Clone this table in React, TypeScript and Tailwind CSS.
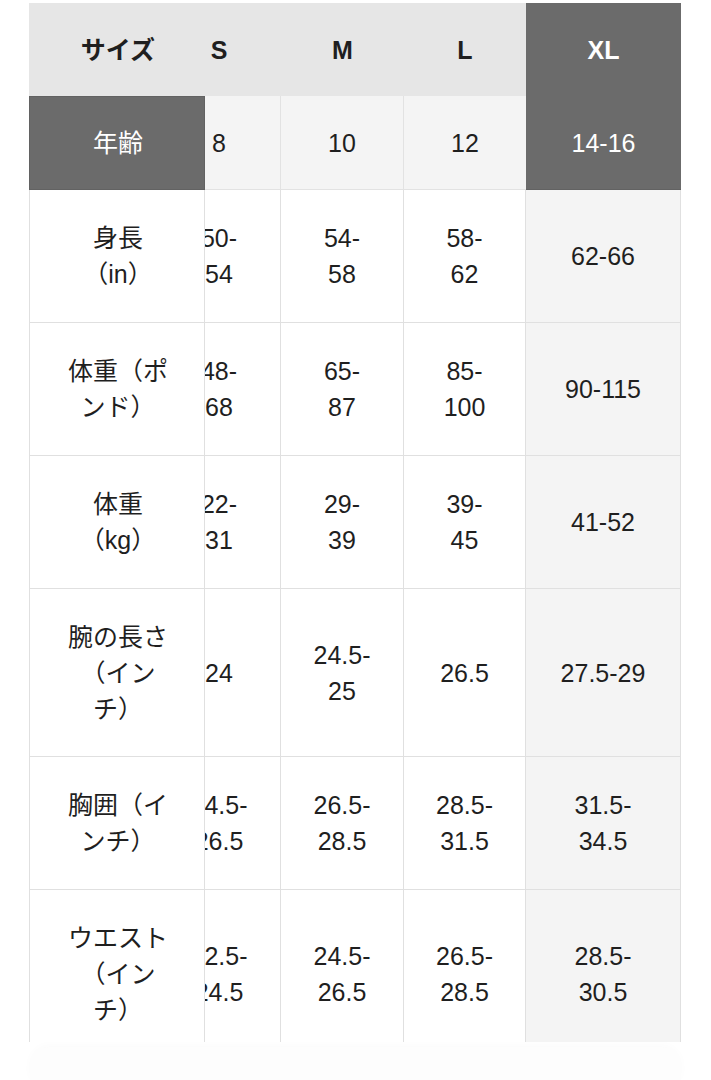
type Row = { label: string[]; vals: string[][]; h: string }

const rows: Row[] = [
  { label: ['身長', '（in）'], vals: [['50-', '54'], ['54-', '58'], ['58-', '62'], ['62-66']], h: 'h-[133px]' },
  { label: ['体重（ポ', 'ンド）'], vals: [['48-', '68'], ['65-', '87'], ['85-', '100'], ['90-115']], h: 'h-[133px]' },
  { label: ['体重', '（kg）'], vals: [['22-', '31'], ['29-', '39'], ['39-', '45'], ['41-52']], h: 'h-[133px]' },
  { label: ['腕の長さ', '（イン', 'チ）'], vals: [['24'], ['24.5-', '25'], ['26.5'], ['27.5-29']], h: 'h-[168px]' },
  { label: ['胸囲（イ', 'ンチ）'], vals: [['24.5-', '26.5'], ['26.5-', '28.5'], ['28.5-', '31.5'], ['31.5-', '34.5']], h: 'h-[133px]' },
  { label: ['ウエスト', '（イン', 'チ）'], vals: [['22.5-', '24.5'], ['24.5-', '26.5'], ['26.5-', '28.5'], ['28.5-', '30.5']], h: 'h-[168px]' },
]

function Lines({ lines }: { lines: string[] }) {
  return (
    <div className="text-center">
      {lines.map((l, i) => (
        <div key={i} className="whitespace-nowrap">{l}</div>
      ))}
    </div>
  )
}

function Clipped({ children }: { children: React.ReactNode }) {
  return (
    <div className="w-full overflow-hidden">
      <div className="w-[122px] -ml-[47px] flex justify-center">{children}</div>
    </div>
  )
}

export default function App() {
  return (
    <div className="min-h-[1080px] bg-white pt-[3px] text-[25px] leading-[36px] text-[#1f1f1f] font-['Liberation_Sans','Noto_Sans_CJK_JP',sans-serif]">
      <div className="ml-[29px] w-[652px] h-[1039px] overflow-hidden">
        <div className="grid grid-cols-[176px_76px_123px_122px_155px]">
          {/* header row */}
          <div className="h-[93px] bg-[#e6e6e6] flex items-center justify-center font-bold pl-[2px]">サイズ</div>
          <div className="h-[93px] bg-[#e6e6e6] flex items-center font-bold">
            <Clipped>S</Clipped>
          </div>
          <div className="h-[93px] bg-[#e6e6e6] flex items-center justify-center font-bold">M</div>
          <div className="h-[93px] bg-[#e6e6e6] flex items-center justify-center font-bold">L</div>
          <div className="h-[93px] bg-[#6b6b6b] flex items-center justify-center font-bold text-white">XL</div>

          {/* age row */}
          <div className="h-[94px] bg-[#6b6b6b] border border-[#626262] flex items-center justify-center text-white pl-[2px]">年齢</div>
          <div className="h-[94px] bg-[#f4f4f4] border-r border-b border-[#e2e2e2] flex items-center">
            <Clipped>8</Clipped>
          </div>
          <div className="h-[94px] bg-[#f4f4f4] border-r border-b border-[#e2e2e2] flex items-center justify-center">10</div>
          <div className="h-[94px] bg-[#f4f4f4] border-b border-[#e2e2e2] flex items-center justify-center">12</div>
          <div className="h-[94px] bg-[#6b6b6b] border-b border-[#626262] flex items-center justify-center text-white">14-16</div>

          {rows.map((r, i) => (
            <div key={i} className="contents">
              <div className={`${r.h} bg-white border-l border-r border-b border-[#e0e0e0] flex items-center justify-center pl-[2px]`}>
                <Lines lines={r.label} />
              </div>
              <div className={`${r.h} bg-white border-r border-b border-[#e0e0e0] flex items-center`}>
                <Clipped>
                  <Lines lines={r.vals[0]} />
                </Clipped>
              </div>
              <div className={`${r.h} bg-white border-r border-b border-[#e0e0e0] flex items-center justify-center`}>
                <Lines lines={r.vals[1]} />
              </div>
              <div className={`${r.h} bg-white border-r border-b border-[#e0e0e0] flex items-center justify-center`}>
                <Lines lines={r.vals[2]} />
              </div>
              <div className={`${r.h} bg-[#f4f4f4] border-r border-b border-[#e0e0e0] flex items-center justify-center`}>
                <Lines lines={r.vals[3]} />
              </div>
            </div>
          ))}
        </div>
      </div>
      <div className="mt-[5px] mx-[30px] h-[33px] rounded-t-[20px] bg-[#fdfdfd] shadow-[0_-2px_8px_rgba(0,0,0,0.02)]" />
    </div>
  )
}
